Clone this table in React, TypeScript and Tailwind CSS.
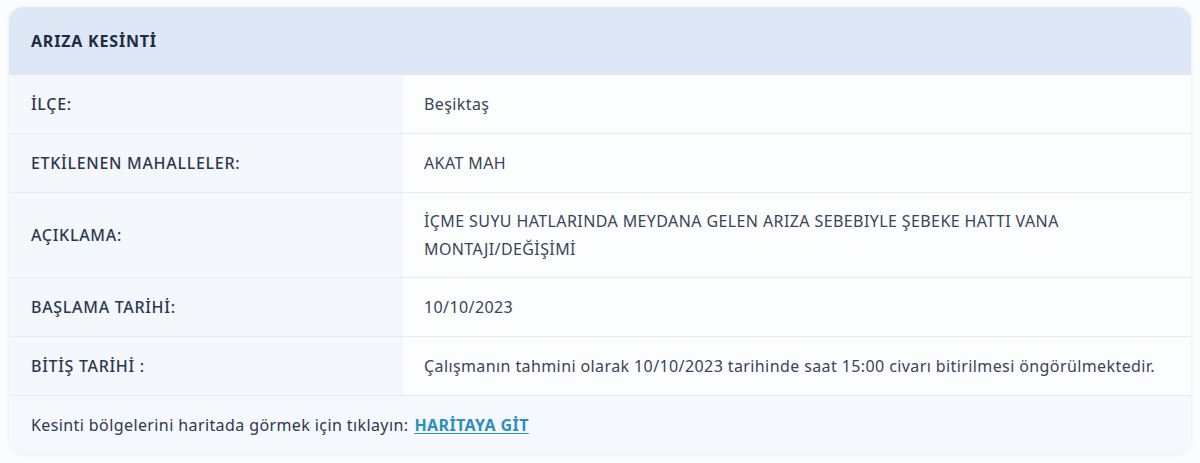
const rows: { label: string; value: string }[] = [
  { label: "İLÇE:", value: "Beşiktaş" },
  { label: "ETKİLENEN MAHALLELER:", value: "AKAT MAH" },
  {
    label: "AÇIKLAMA:",
    value: "İÇME SUYU HATLARINDA MEYDANA GELEN ARIZA SEBEBIYLE ŞEBEKE HATTI VANA MONTAJI/DEĞİŞİMİ",
  },
  { label: "BAŞLAMA TARİHİ:", value: "10/10/2023" },
  {
    label: "BİTİŞ TARİHİ :",
    value: "Çalışmanın tahmini olarak 10/10/2023 tarihinde saat 15:00 civarı bitirilmesi öngörülmektedir.",
  },
];

export default function App() {
  return (
    <div className="min-h-[463px] bg-[#fbfcfe] px-[9px] pt-[7px] font-['Noto_Sans',sans-serif] text-[16px] tracking-[0.4px]">
      <div className="overflow-hidden rounded-[14px] bg-[#f5f8fc] shadow-[0_1px_4px_rgba(30,50,90,0.08)]">
        {/* Header */}
        <div className="flex h-[68px] items-center bg-[#dde7f6] px-[22px]">
          <h2 className="text-[16px] font-bold tracking-[0.8px] text-[#1f2b46]">ARIZA KESİNTİ</h2>
        </div>

        {rows.map((row) => (
          <div key={row.label} className="grid grid-cols-[394px_1fr] border-b border-[#e6ebf2]">
            <div className="flex min-h-[58px] items-center bg-[#f4f7fb] px-[22px] font-medium tracking-[0.7px] text-[#2c3850]">
              {row.label}
            </div>
            <div className="flex min-h-[58px] items-center bg-[#fcfdfe] py-[14px] pl-[21px] pr-[14px] leading-[28px] text-[#3a4457]">
              {row.value}
            </div>
          </div>
        ))}

        {/* Footer */}
        <div className="flex h-[57px] items-center px-[22px] text-[#2c3850]">
          <span>Kesinti bölgelerini haritada görmek için tıklayın:</span>
          <a href="#" className="ml-[6px] font-bold text-[#2b8fc0] underline underline-offset-2">
            HARİTAYA GİT
          </a>
        </div>
      </div>
    </div>
  );
}
